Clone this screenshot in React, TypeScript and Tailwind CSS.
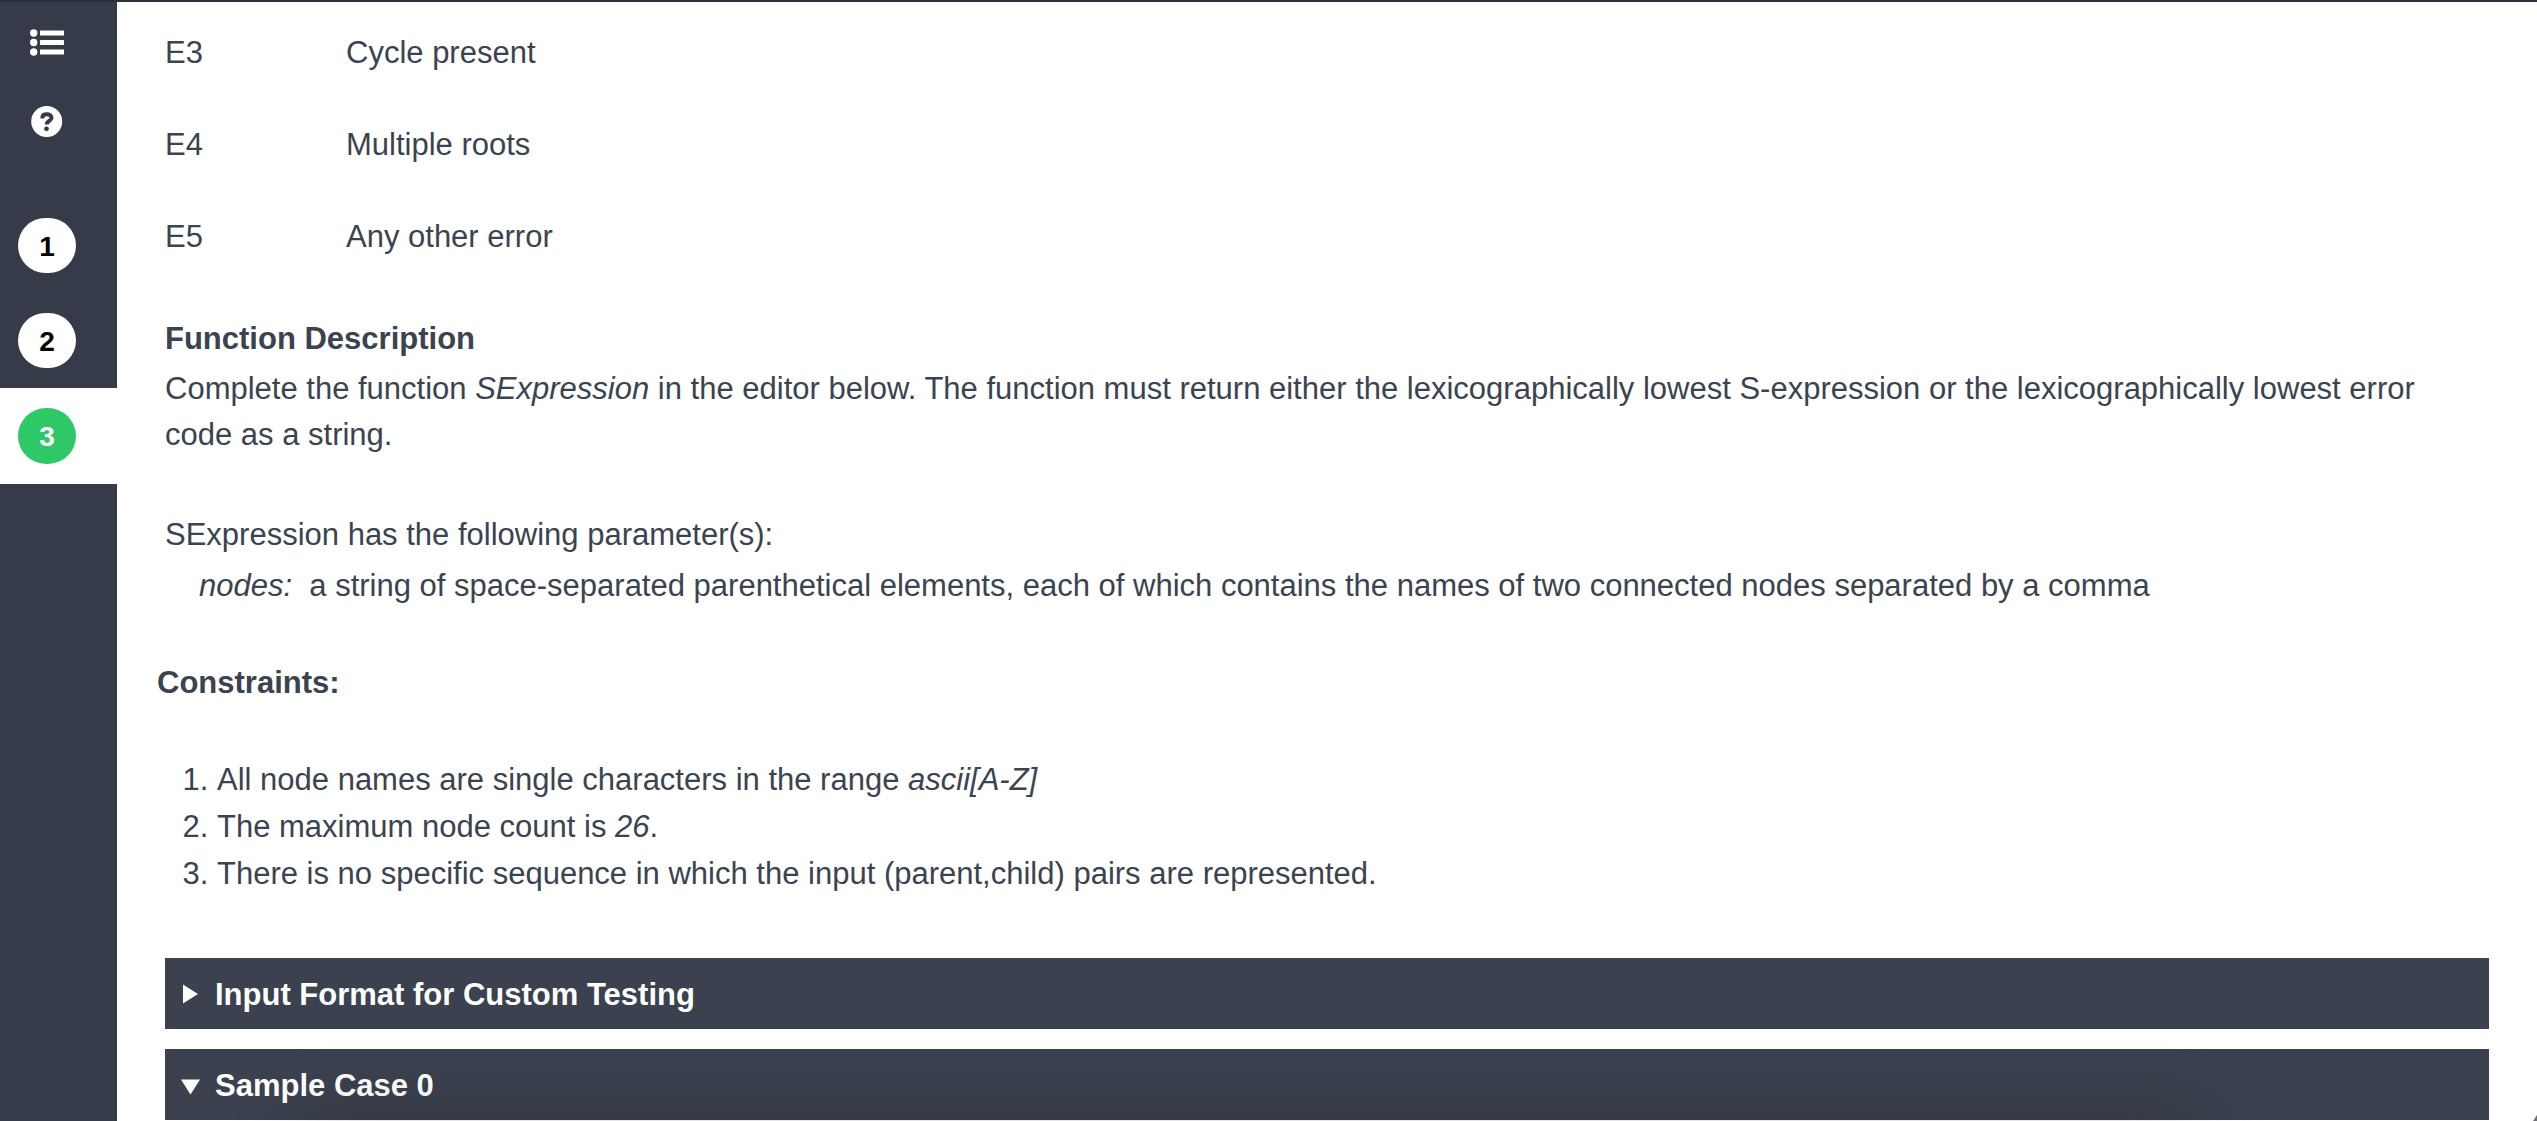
import React from "react";

const codes = [
  { code: "E3", text: "Cycle present" },
  { code: "E4", text: "Multiple roots" },
  { code: "E5", text: "Any other error" },
];

function ListIcon() {
  return (
    <svg width="34" height="27" viewBox="0 0 34 27" fill="#fff" aria-hidden="true">
      {[4, 13.5, 23].map((y) => (
        <g key={y}>
          <circle cx="3.7" cy={y} r="3.7" />
          <rect x="10" y={y - 2.6} width="24" height="5.2" rx="0.6" />
        </g>
      ))}
    </svg>
  );
}

function HelpIcon() {
  return (
    <svg width="32" height="31" viewBox="0 0 32 31" aria-hidden="true">
      <circle cx="15.7" cy="15.5" r="15.5" fill="#fff" />
      <path d="M11.400 12.400V11.600C11.400 9.400 13 8.200 15.800 8.200s4.700 1.500 4.700 3.700c0 3-4.700 2.700-4.700 6.500" fill="none" stroke="#353b48" strokeWidth="4" />
      <circle cx="15.5" cy="22.800" r="2.400" fill="#353b48" />
    </svg>
  );
}

function Sidebar() {
  return (
    <nav aria-label="Questions" className="flex w-[117px] shrink-0 flex-col bg-[#353b48]">
      <div className="flex w-[94px] flex-col items-center pt-[27px]">
        <button aria-label="All questions"><ListIcon /></button>
        <button aria-label="Help" className="mt-[50px]"><HelpIcon /></button>
      </div>
      <div className="mt-[61px] flex flex-col text-[28px] font-bold leading-[32px]">
        <button className="flex h-[95px] w-full items-center pl-[18px]">
          <span className="flex h-[55px] w-[58px] items-center justify-center rounded-full bg-white pt-0.5 text-black">1</span>
        </button>
        <button className="flex h-[95px] w-full items-center pl-[18px]">
          <span className="flex h-[55px] w-[58px] items-center justify-center rounded-full bg-white pt-0.5 text-black">2</span>
        </button>
        <button aria-current="page" className="flex h-24 w-full items-center bg-white pl-[18px]">
          <span className="flex h-14 w-[58px] items-center justify-center rounded-full bg-[#2ec866] pt-0.5 text-white">3</span>
        </button>
      </div>
    </nav>
  );
}

function SectionBar({ title, open }: { title: string; open: boolean }) {
  return (
    <button aria-expanded={open} className="flex h-[71px] w-full items-center bg-[#3b414e] pl-4 text-left font-bold text-white">
      <svg width="19" height="20" viewBox="0 0 19 20" fill="#fff" className="mr-[15px]" aria-hidden="true">
        {open ? <path d="M0 4.500h19L9.500 19.500z" /> : <path d="M2 0.500v19L17 10z" />}
      </svg>
      <span className="pt-[3px]">{title}</span>
    </button>
  );
}

export default function App() {
  return (
    <div className="flex h-screen overflow-hidden border-t-2 border-[#2a3040] bg-white font-['Liberation_Sans',Arial,sans-serif] text-[31px] leading-[46px] text-[#3b4350]">
      <Sidebar />
      <main className="relative min-w-0 flex-1 px-12 pt-[5px]">
        <table className="w-full">
          <tbody>
            {codes.map((c) => (
              <tr key={c.code} className="h-[92px]">
                <td className="w-[181px]">{c.code}</td>
                <td>{c.text}</td>
              </tr>
            ))}
          </tbody>
        </table>
        <h2 className="mt-[33px] font-bold">Function Description</h2>
        <p className="mt-1 pr-12">
          Complete the function <em>SExpression</em> in the editor below. The function must return either the lexicographically lowest S-expression or the lexicographically lowest error code as a string.
        </p>
        <p className="mt-[54px]">SExpression has the following parameter(s):</p>
        <p className="mt-[5px] pl-[34px]">
          <em>nodes:</em>&nbsp; a string of space-separated parenthetical elements, each of which contains the names of two connected nodes separated by a comma
        </p>
        <h2 className="-ml-2 mt-[51px] font-bold">Constraints:</h2>
        <ol className="mt-[50px] list-decimal pl-[52px] leading-[47px]">
          <li>All node names are single characters in the range <em>ascii[A-Z]</em></li>
          <li>The maximum node count is <em>26</em>.</li>
          <li>There is no specific sequence in which the input (parent,child) pairs are represented.</li>
        </ol>
        <div className="mt-[61px] flex flex-col gap-5">
          <SectionBar title="Input Format for Custom Testing" open={false} />
          <SectionBar title="Sample Case 0" open />
        </div>
        {/* Shadow cast by the panel docked under the viewport */}
        <div className="pointer-events-none absolute left-[183px] right-[337px] top-full h-20 shadow-[0_0_80px_rgba(0,0,0,0.2)]" />
        <svg width="4" height="6" viewBox="0 0 4 6" className="absolute bottom-0 right-0" aria-hidden="true">
          <path d="M4 0v6H0z" fill="#6b6f75" />
        </svg>
      </main>
    </div>
  );
}
